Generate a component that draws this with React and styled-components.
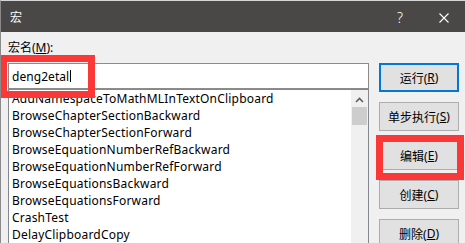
import React from "react";
import styled, { createGlobalStyle } from "styled-components";

const GlobalStyle = createGlobalStyle`
  html, body {
    margin: 0;
    padding: 0;
    background: #f0f0f0;
  }
  body {
    font-family: "Noto Sans", "Noto Sans CJK SC", sans-serif;
  }
`;

const macros = [
  "AddNamespaceToMathMLInTextOnClipboard",
  "BrowseChapterSectionBackward",
  "BrowseChapterSectionForward",
  "BrowseEquationNumberRefBackward",
  "BrowseEquationNumberRefForward",
  "BrowseEquationsBackward",
  "BrowseEquationsForward",
  "CrashTest",
  "DelayClipboardCopy",
];

const buttons = [
  { label: "运行", key: "R", focused: true },
  { label: "单步执行", key: "S" },
  { label: "编辑", key: "E" },
  { label: "创建", key: "C" },
  { label: "删除", key: "D" },
];

const App = () => {
  return (
    <>
      <GlobalStyle />
      <Window>
        <TitleBar>
          <Title>宏</Title>
          <TitleActions>
            <HelpMark>?</HelpMark>
            <CloseMark viewBox="0 0 10 10">
              <path d="M0.5 0.5 L9.5 9.5 M9.5 0.5 L0.5 9.5" />
            </CloseMark>
          </TitleActions>
        </TitleBar>
        <Body>
          <LeftColumn>
            <Label>
              宏名(<u>M</u>):
            </Label>
            <NameInput>
              deng2etal
              <Caret />
            </NameInput>
            <ListBox>
              <Items>
                {macros.map((m) => (
                  <Item key={m}>{m}</Item>
                ))}
              </Items>
              <ScrollBar>
                <ArrowUp viewBox="0 0 9 6">
                  <path d="M1 5 L4.5 1.5 L8 5" />
                </ArrowUp>
                <Thumb />
              </ScrollBar>
            </ListBox>
          </LeftColumn>
          <ButtonColumn>
            {buttons.map((b) => (
              <DialogButton key={b.key} $focused={b.focused}>
                {b.label}(<u>{b.key}</u>)
              </DialogButton>
            ))}
          </ButtonColumn>
        </Body>
        <Mark $left={0} $top={55} $width={95} $height={43} />
        <Mark $left={376} $top={135} $width={88} $height={45} />
      </Window>
    </>
  );
};

export default App;
//
const Window = styled.div`
  position: relative;
  width: 465px;
  height: 243px;
  overflow: hidden;
  box-sizing: border-box;
  border-top: 1px solid #d6d6d6;
  border-left: 1px solid #8a8a8a;
  background: #f0f0f0;
  display: flex;
  flex-direction: column;
`;

const TitleBar = styled.div`
  height: 31px;
  background: #4a4846;
  color: #fff;
  display: flex;
  align-items: center;
  justify-content: space-between;
  padding-left: 9px;
  flex-shrink: 0;
`;

const Title = styled.span`
  font-size: 12px;
  line-height: 12px;
  margin-top: 2px;
`;

const TitleActions = styled.div`
  display: flex;
  align-items: center;
  gap: 36px;
  padding-right: 16px;
  margin-top: 2px;
`;

const HelpMark = styled.span`
  font-family: "Noto Sans", sans-serif;
  font-size: 14px;
  line-height: 14px;
  font-weight: 300;
`;

const CloseMark = styled.svg`
  width: 10px;
  height: 10px;
  stroke: #fff;
  stroke-width: 1.1;
  fill: none;
`;

const Body = styled.div`
  flex: 1;
  display: flex;
  gap: 10px;
  padding: 8px 0 0 7px;
  min-height: 0;
`;

const LeftColumn = styled.div`
  width: 361px;
  display: flex;
  flex-direction: column;
  min-height: 0;
`;

const Label = styled.div`
  font-size: 12px;
  line-height: 16px;
  color: #000;
  height: 16px;
  margin-bottom: 7px;

  & u {
    text-underline-offset: 1px;
  }
`;

const NameInput = styled.div`
  height: 26px;
  flex-shrink: 0;
  box-sizing: border-box;
  border: 1px solid #8c8c8c;
  background: #fff;
  font-size: 12px;
  letter-spacing: 0.05px;
  padding-left: 3px;
  display: flex;
  align-items: center;
  color: #000;
`;

const Caret = styled.span`
  display: inline-block;
  width: 1px;
  height: 12px;
  background: #000;
  margin-left: 1px;
`;

const ListBox = styled.div`
  flex: 1;
  min-height: 0;
  display: flex;
  border: 1px solid #828790;
  border-bottom: none;
  background: #fff;
`;

const Items = styled.div`
  flex: 1;
  overflow: hidden;
  padding-left: 3px;
`;

const Item = styled.div`
  font-size: 12px;
  letter-spacing: 0.2px;
  line-height: 17px;
  height: 17px;
  white-space: nowrap;
  color: #000;
`;

const ScrollBar = styled.div`
  width: 17px;
  background: #f0f0f0;
  display: flex;
  flex-direction: column;
  align-items: center;
  padding-top: 7px;
  box-sizing: border-box;
`;

const ArrowUp = styled.svg`
  width: 9px;
  height: 6px;
  stroke: #606060;
  stroke-width: 1.6;
  fill: none;
`;

const Thumb = styled.div`
  width: 15px;
  height: 18px;
  margin-top: 4px;
  background: #cdcdcd;
`;

const ButtonColumn = styled.div`
  display: flex;
  flex-direction: column;
  gap: 10px;
  padding-top: 23px;
`;

const DialogButton = styled.div`
  width: 80px;
  height: 29px;
  box-sizing: border-box;
  border: ${(p) => (p.$focused ? "2px solid #0078d7" : "1px solid #adadad")};
  background: #e1e1e1;
  font-size: 12px;
  color: #000;
  display: flex;
  align-items: center;
  justify-content: center;
  flex-shrink: 0;

  & u {
    text-underline-offset: 1px;
  }
`;

const Mark = styled.div`
  position: absolute;
  left: ${(p) => p.$left - 1}px;
  top: ${(p) => p.$top - 1}px;
  width: ${(p) => p.$width}px;
  height: ${(p) => p.$height}px;
  box-sizing: border-box;
  border: 7px solid #fa3838;
  pointer-events: none;
`;
